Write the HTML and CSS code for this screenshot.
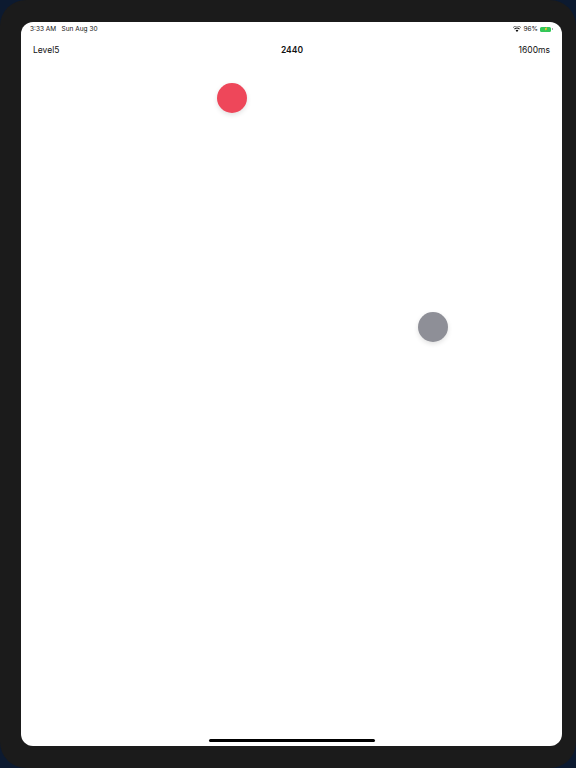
FILE: index.html
```html
<!DOCTYPE html>
<html>
<head>
<meta charset="utf-8">
<link rel="stylesheet" href="styles.css">
</head>
<body>
<div class="device">
  <div class="screen">
    <div class="status">
      <div class="status-left">3:33 AM&nbsp;&nbsp;&nbsp;Sun Aug 30</div>
      <div class="status-right">
        <svg class="wifi" width="8" height="6" viewBox="0 0 16 12"><path d="M8 12 L5.2 8.8 A4 4 0 0 1 10.8 8.8 Z M3.6 7 A6.5 6.5 0 0 1 12.4 7 L13.8 5.4 A8.8 8.8 0 0 0 2.2 5.4 Z M0.6 3.6 A11 11 0 0 1 15.4 3.6 L16 2.8 L15.4 2 A12.4 12.4 0 0 0 0.6 2 L0 2.8 Z" fill="#111"/></svg>
        <span class="pct">96%</span>
        <span class="battery"><span class="bolt">⚡</span></span><span class="nub"></span>
      </div>
    </div>
    <div class="header">
      <span class="level">Level5</span>
      <span class="score">2440</span>
      <span class="time">1600ms</span>
    </div>
    <div class="field">
      <div class="dot red"></div>
      <div class="dot gray"></div>
    </div>
    <div class="home"></div>
  </div>
</div>
</body>
</html>
```
FILE: styles.css
```css
html, body {
  margin: 0;
  padding: 0;
  background: #0c1a30;
}
body {
  width: 576px;
  height: 768px;
  overflow: hidden;
  font-family: Inter, Roboto, "Liberation Sans", sans-serif;
}
.device {
  box-sizing: border-box;
  width: 576px;
  height: 768px;
  padding: 22px 14px 22px 21px;
  background: #1b1b1b;
  border-radius: 26px;
}
.screen {
  position: relative;
  width: 100%;
  height: 100%;
  background: #fff;
  border-radius: 12px;
  display: flex;
  flex-direction: column;
  overflow: hidden;
}
.status {
  display: flex;
  justify-content: space-between;
  align-items: center;
  height: 12px;
  padding: 1px 9px 0 9px;
  font-size: 6.5px;
  color: #111;
}
.status-right {
  display: flex;
  align-items: center;
  gap: 2px;
}
.wifi { margin-right: 1px; }
.battery {
  width: 11px;
  height: 5px;
  background: #34c759;
  border-radius: 1.5px;
  display: flex;
  align-items: center;
  justify-content: center;
  font-size: 4px;
  line-height: 1;
  color: #111;
}
.bolt { transform: scale(0.8); }
.nub {
  width: 1px;
  height: 2px;
  background: #aaa;
  margin-left: -1px;
}
.header {
  display: flex;
  justify-content: space-between;
  align-items: center;
  height: 30px;
  padding: 0 12px 0 12px;
  font-size: 8.5px;
  color: #111;
}
.score {
  font-weight: 600;
  margin-left: 6px;
}
.field {
  flex: 1;
  position: relative;
}
.dot {
  position: absolute;
  width: 30px;
  height: 30px;
  border-radius: 50%;
  box-shadow: 0 2px 5px rgba(0,0,0,0.12);
}
.red {
  background: #ee475a;
  left: 196px;
  top: 18px;
}
.gray {
  background: #8e8f97;
  left: 397px;
  top: 247px;
}
.home {
  position: absolute;
  left: 188px;
  bottom: 4px;
  width: 166px;
  height: 3px;
  border-radius: 2px;
  background: #000;
}
```
